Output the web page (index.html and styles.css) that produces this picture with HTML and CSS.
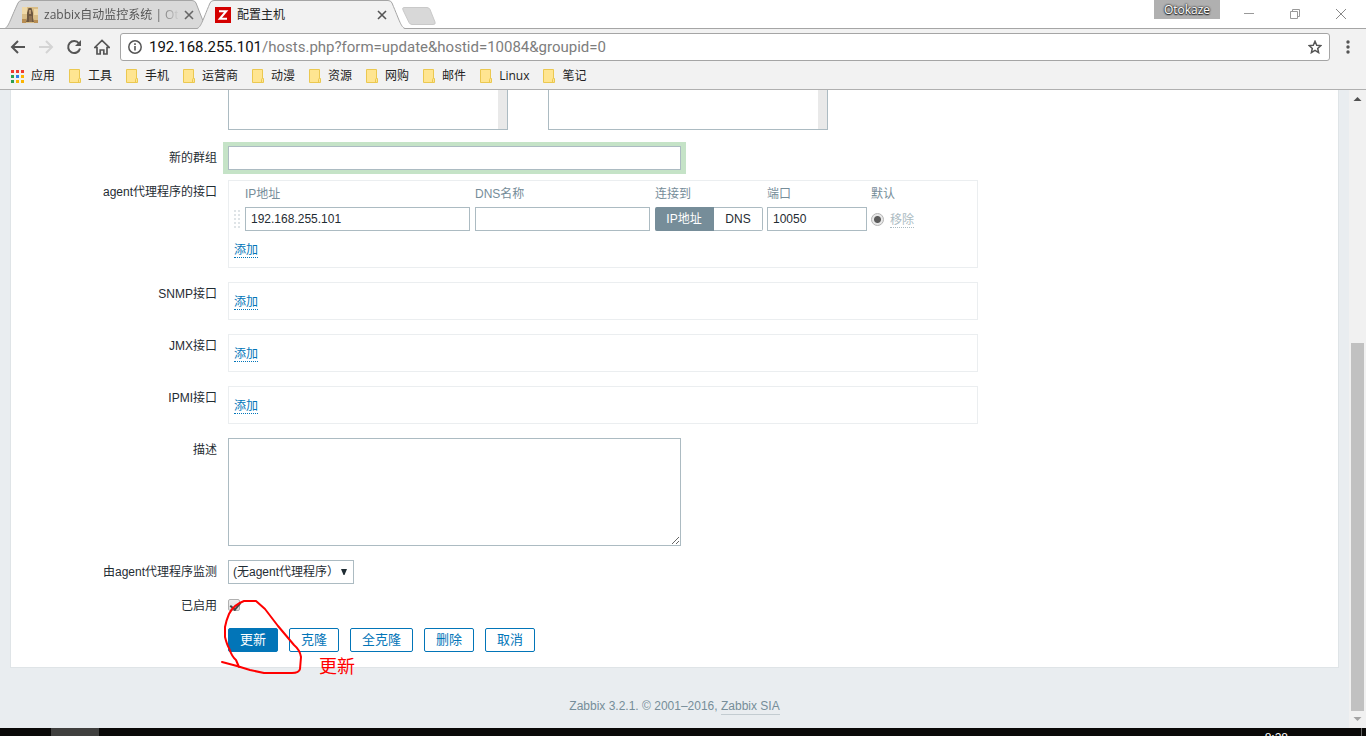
FILE: index.html
```html
<!DOCTYPE html>
<html lang="zh-CN">
<head>
<meta charset="utf-8">
<title>配置主机</title>
<link rel="stylesheet" href="styles.css">
</head>
<body>
<header class="browser">
  <div class="tabstrip">
    <svg class="tab-shapes" width="440" height="29" viewBox="0 0 440 29" aria-hidden="true">
      <path d="M5 28.5C9 26 10 20 18 3Q19 .5 22 .5H192Q195 .5 196 3L206 28.5Z" fill="#d9d9d9" stroke="#a5a5a5"/>
      <path d="M197 29C201 27 202 22 210 3Q211 .5 214 .5H388Q391 .5 392 3C400 22 401 27 405 29Z" fill="#f2f2f2"/>
      <path d="M197 28.500C201 27 202 22 210 3Q211 .5 214 .5H388Q391 .5 392 3C400 22 401 27 405 28.500" fill="none" stroke="#a5a5a5"/>
      <path d="M404 7.500H427Q429 7.500 430 9.500L435 22Q436 24.500 433 24.500H412Q410 24.500 409 22.500L403 10Q402 7.500 404 7.500Z" fill="#d8d8d8" stroke="#c9c9c9"/>
    </svg>
    <div class="tab tab-back">
      <svg width="16" height="16" viewBox="0 0 16 16" aria-hidden="true"><path fill="#d9bd86" d="M0 0h16v16H0z"/><path fill="#efd9a8" d="M0 0h5v7H0zM12 2h4v6h-4z"/><path fill="#b88d52" d="M0 12h4v4H0zM12 13h4v3h-4z"/><path fill="#6e5840" d="M6.500 1h3L11 6v5l1 4h-2V9H7v6H4l1-4V6z"/><path fill="#b99a73" d="M7 3h2v4H7z"/><path fill="#8d7050" d="M7 9h3v6H7z"/></svg>
      <span class="tab-title fade">zabbix自动监控系统 | Ot</span>
      <button class="tab-close" aria-label="关闭标签页"><svg width="10" height="10" viewBox="0 0 10 10"><path d="M1 1l8 8M9 1L1 9" stroke="#666" stroke-width="1.600"/></svg></button>
    </div>
    <div class="tab tab-front">
      <svg width="16" height="16" viewBox="0 0 16 16" aria-hidden="true"><path fill="#d40000" d="M0 0h16v16H0z"/><path d="M4 4.200h7.200L4.800 11.800H12" fill="none" stroke="#fff" stroke-width="2"/></svg>
      <span class="tab-title">配置主机</span>
      <button class="tab-close" aria-label="关闭标签页"><svg width="10" height="10" viewBox="0 0 10 10"><path d="M1 1l8 8M9 1L1 9" stroke="#555" stroke-width="1.600"/></svg></button>
    </div>
    <div class="window-controls">
      <span class="profile">Otokaze</span>
      <button aria-label="最小化"><svg width="12" height="12" viewBox="0 0 12 12"><path d="M1 5.500h10" stroke="#999"/></svg></button>
      <button aria-label="还原"><svg width="12" height="12" viewBox="0 0 12 12" fill="none" stroke="#999"><path d="M1.500 3.500h7v7h-7zM3.500 3V1.500h7v7H9"/></svg></button>
      <button aria-label="关闭"><svg width="12" height="12" viewBox="0 0 12 12"><path d="M1 1l10 10M11 1L1 11" stroke="#888"/></svg></button>
    </div>
  </div>
  <div class="toolbar">
    <div class="nav-buttons">
      <button aria-label="后退"><svg width="16" height="16" viewBox="0 0 16 16" fill="none" stroke="#555" stroke-width="2"><path d="M15 8H2M8 2L2 8l6 6"/></svg></button>
      <button aria-label="前进"><svg width="16" height="16" viewBox="0 0 16 16" fill="none" stroke="#d4d4d4" stroke-width="2"><path d="M1 8h13M8 2l6 6-6 6"/></svg></button>
      <button aria-label="刷新"><svg width="16" height="16" viewBox="0 0 16 16"><path d="M13 4.500A6 6 0 1 0 14 9.500" fill="none" stroke="#555" stroke-width="2"/><path d="M15 1v6H9z" fill="#555"/></svg></button>
      <button aria-label="主页"><svg width="16" height="16" viewBox="0 0 16 16"><path d="M.7 8.500L8 1.500l7.300 7H13V15H9.800v-4H6.200v4H3V8.500z" fill="none" stroke="#555" stroke-width="1.700"/></svg></button>
    </div>
    <div class="address">
      <svg width="14" height="14" viewBox="0 0 14 14" aria-hidden="true"><circle cx="7" cy="7" r="6.200" fill="none" stroke="#555" stroke-width="1.500"/><path d="M7 6v4.500M7 3.300v1.600" stroke="#555" stroke-width="1.600"/></svg>
      <a class="url" href="#"><b>192.168.255.101</b>/hosts.php?form=update&amp;hostid=10084&amp;groupid=0</a>
      <button aria-label="收藏"><svg width="14" height="14" viewBox="0 0 14 14"><path d="M7 1.300l1.700 3.900 4.100.4-3.100 2.800.9 4.200L7 10.400l-3.600 2.200.9-4.200L1.200 5.600l4.100-.4z" fill="none" stroke="#555" stroke-width="1.500"/></svg></button>
    </div>
    <button class="menu" aria-label="菜单"><svg width="4" height="14" viewBox="0 0 4 14" fill="#555"><circle cx="2" cy="2" r="1.700"/><circle cx="2" cy="7" r="1.700"/><circle cx="2" cy="12" r="1.700"/></svg></button>
  </div>
  <svg class="defs" aria-hidden="true"><symbol id="folder" viewBox="0 0 12 14"><path d="M.5.500h10v9h1v4H.5z" fill="#ffe591" stroke="#ebc850"/><path d="M9.500 13V10.500Q9.500 9.500 10.500 9.500" fill="none" stroke="#ebc850"/></symbol></svg>
  <nav class="bookmarks">
    <a href="#"><svg width="13" height="13" viewBox="0 0 13 13"><path fill="#f03a30" d="M0 0h3v3H0zM5 0h3v3H5zM10 0h3v3h-3z"/><path fill="#2c9f50" d="M0 5h3v3H0zM0 10h3v3H0z"/><path fill="#2a7fe8" d="M5 5h3v3H5z"/><path fill="#fbb400" d="M10 5h3v3h-3zM5 10h3v3H5zM10 10h3v3h-3z"/></svg>应用</a>
    <a href="#"><svg width="12" height="14"><use href="#folder"/></svg>工具</a>
    <a href="#"><svg width="12" height="14"><use href="#folder"/></svg>手机</a>
    <a href="#"><svg width="12" height="14"><use href="#folder"/></svg>运营商</a>
    <a href="#"><svg width="12" height="14"><use href="#folder"/></svg>动漫</a>
    <a href="#"><svg width="12" height="14"><use href="#folder"/></svg>资源</a>
    <a href="#"><svg width="12" height="14"><use href="#folder"/></svg>网购</a>
    <a href="#"><svg width="12" height="14"><use href="#folder"/></svg>邮件</a>
    <a href="#"><svg width="12" height="14"><use href="#folder"/></svg>Linux</a>
    <a href="#"><svg width="12" height="14"><use href="#folder"/></svg>笔记</a>
  </nav>
</header>

<div class="viewport">
  <main class="page">
    <form class="card">
      <div class="row row-lists">
        <span class="label"></span>
        <div class="lists">
          <select multiple class="list" aria-label="所在群组"></select>
          <select multiple class="list" aria-label="其它群组"></select>
        </div>
      </div>
      <div class="row row-tight">
        <label class="label" for="newgroup">新的群组</label>
        <input class="input wide focused" id="newgroup" type="text">
      </div>
      <div class="row">
        <span class="label">agent代理程序的接口</span>
        <div class="box">
          <table class="interfaces">
            <thead><tr><th class="c-drag"></th><th class="c-ip">IP地址</th><th class="c-dns">DNS名称</th><th class="c-via">连接到</th><th class="c-port">端口</th><th>默认</th></tr></thead>
            <tbody><tr>
              <td><svg class="drag" width="6" height="18" viewBox="0 0 6 18" fill="#dfe4e7" aria-hidden="true"><path d="M0 0h2v2H0zM4 0h2v2H4zM0 4h2v2H0zM4 4h2v2H4zM0 8h2v2H0zM4 8h2v2H4zM0 12h2v2H0zM4 12h2v2H4zM0 16h2v2H0zM4 16h2v2H4z"/></svg></td>
              <td><input class="input ip" type="text" value="192.168.255.101" aria-label="IP地址"></td>
              <td><input class="input dns" type="text" aria-label="DNS名称"></td>
              <td><div class="segmented"><button type="button" class="on">IP地址</button><button type="button">DNS</button></div></td>
              <td><input class="input port" type="text" value="10050" aria-label="端口"></td>
              <td><div class="default"><input class="radio" type="radio" checked aria-label="默认"><button type="button" class="remove" disabled>移除</button></div></td>
            </tr></tbody>
          </table>
          <div class="add"><a href="#">添加</a></div>
        </div>
      </div>
      <div class="row"><span class="label">SNMP接口</span><div class="box"><div class="add"><a href="#">添加</a></div></div></div>
      <div class="row"><span class="label">JMX接口</span><div class="box"><div class="add"><a href="#">添加</a></div></div></div>
      <div class="row"><span class="label">IPMI接口</span><div class="box"><div class="add"><a href="#">添加</a></div></div></div>
      <div class="row">
        <label class="label" for="description">描述</label>
        <textarea class="input wide area" id="description"></textarea>
      </div>
      <div class="row row-tight">
        <label class="label" for="proxy">由agent代理程序监测</label>
        <div class="select">
          <select id="proxy"><option>(无agent代理程序）</option></select>
          <svg width="8" height="6" viewBox="0 0 8 6" aria-hidden="true"><path d="M1 0h6L4.500 6h-1z" fill="#1f2c33"/></svg>
        </div>
      </div>
      <div class="row row-tight">
        <label class="label" for="enabled">已启用</label>
        <input class="check" id="enabled" type="checkbox" checked>
      </div>
      <div class="row row-actions">
        <span class="label"></span>
        <div class="actions">
          <button type="button" class="btn primary">更新</button>
          <button type="button" class="btn">克隆</button>
          <button type="button" class="btn">全克隆</button>
          <button type="button" class="btn">删除</button>
          <button type="button" class="btn">取消</button>
          <svg class="scribble" width="84" height="80" viewBox="0 0 84 80" aria-hidden="true"><path d="M2 64L17 68L30 72L44 75H72Q79 75 80 71L81 59Q80 52 74 47L58 28L45 11L36 3H24Q13 7 9 16Q6 23 5 29V39Q7 47 9 50Q12 59 16 62L19 69" fill="none" stroke="#f00" stroke-width="2" stroke-linejoin="round" stroke-linecap="round"/></svg>
          <span class="note">更新</span>
        </div>
      </div>
    </form>
    <footer class="footer">Zabbix 3.2.1. © 2001–2016, <a href="#">Zabbix SIA</a></footer>
  </main>
  <div class="scrollbar" aria-hidden="true">
    <svg width="17" height="17" viewBox="0 0 17 17"><path d="M4.500 11h8L8.500 7z" fill="#505050"/></svg>
    <div class="track"><div class="thumb"></div></div>
    <svg width="17" height="17" viewBox="0 0 17 17"><path d="M4.500 6h8L8.500 10z" fill="#a3a3a3"/></svg>
  </div>
</div>
<div class="taskbar"><span class="task"></span><span class="clock">8:28</span><span class="edge"></span></div>
</body>
</html>
```
FILE: styles.css
```css
* { box-sizing: border-box; }
body {
  margin: 0;
  min-height: 100vh;
  display: flex;
  flex-direction: column;
  overflow: hidden;
  background: #000;
  color: #1f2c33;
  font: 12px/24px "Liberation Sans", "Noto Sans CJK SC", sans-serif;
}
button, input, select, textarea { font: inherit; color: inherit; margin: 0; }
button { padding: 0; border: 0; background: none; }
a { color: inherit; text-decoration: none; }
svg { display: block; flex: none; }

.browser {
  background: #f2f2f2;
  border-bottom: 1px solid #b0b0b0;
  font-family: "Open Sans", "Noto Sans CJK SC", sans-serif;
  color: #222;
}
.defs { position: absolute; width: 0; height: 0; }
.tabstrip {
  position: relative;
  display: flex;
  height: 29px;
  background: #fff;
  border-bottom: 1px solid #a5a5a5;
}
.tab-shapes { position: absolute; top: 0; left: 0; }
.tab { position: relative; display: flex; align-items: center; gap: 6px; height: 29px; }
.tab-back { width: 194px; padding-left: 22px; color: #555; }
.tab-front { width: 193px; padding-left: 21px; }
.tab-title { flex: 1; min-width: 0; white-space: nowrap; }
.fade { mask-image: linear-gradient(to right, #000 112px, transparent 136px); }
.window-controls { display: flex; align-items: flex-start; margin-left: auto; padding-right: 2px; }
.window-controls button { display: flex; justify-content: center; align-items: center; width: 46px; height: 27px; }
.profile {
  width: 66px;
  height: 19px;
  margin-right: 6px;
  background: #b0b0b0;
  color: #fff;
  line-height: 19px;
  text-align: center;
  text-shadow: 0 0 2px #222, 0 0 2px #222, 0 1px 1px #333;
}
.toolbar { display: flex; align-items: center; height: 36px; padding: 0 16px 0 10px; }
.nav-buttons { display: flex; gap: 12px; width: 110px; }
.address {
  flex: 1;
  display: flex;
  align-items: center;
  height: 28px;
  padding: 0 7px;
  border: 1px solid #a5a5a5;
  border-radius: 3px;
  background: #fff;
}
.url { flex: 1; margin-left: 7px; font-family: Roboto, sans-serif; font-size: 15px; color: #7d7d7d; white-space: nowrap; }
.url b { font-weight: 400; color: #111; }
.menu { margin-left: 16px; }
.bookmarks { display: flex; gap: 14px; height: 24px; padding: 1px 0 0 11px; }
.bookmarks a { display: flex; align-items: center; gap: 7px; line-height: 20px; height: 20px; }

.viewport { flex: 1; display: flex; }
.page { flex: 1; background: #e9edf0; }
.card {
  margin: 0 10px;
  padding-bottom: 15px;
  background: #fff;
  border: 1px solid #dfe4e7;
  border-top: 0;
}
.row { display: grid; grid-template-columns: 206px 1fr; column-gap: 11px; margin-bottom: 14px; justify-items: start; }
.row-lists { margin-bottom: 16px; }
.row-tight { margin-bottom: 10px; }
.row-actions { margin-bottom: 0; }
.label { justify-self: end; }
.lists { display: flex; gap: 40px; }
.list {
  width: 280px;
  height: 40px;
  padding: 0;
  border: 1px solid #acbbc2;
  border-top: 0;
  border-radius: 0;
  outline: 0;
  background: linear-gradient(#e9e9e9, #e9e9e9) right / 9px 100% no-repeat #fff;
}
.input {
  display: block;
  height: 24px;
  padding: 0 5px;
  border: 1px solid #acbbc2;
  border-radius: 0;
  outline: 0;
  background: #fff;
}
.wide { width: 453px; }
.focused { box-shadow: -1px 0 0 4px #c5e3c7, 1px 0 0 4px #c5e3c7; }
.area { height: 108px; resize: both; }
.box { width: 100%; max-width: 750px; border: 1px solid #ebeef0; }
.interfaces { width: 100%; table-layout: fixed; border-collapse: collapse; }
.interfaces th { height: 26px; padding: 0; text-align: left; font-weight: 400; color: #768d99; }
.interfaces td { height: 24px; padding: 0; }
.c-drag { width: 16px; }
.c-ip { width: 230px; }
.c-dns { width: 180px; }
.c-via { width: 112px; }
.c-port { width: 104px; }
.drag { margin-left: 5px; }
.ip { width: 225px; }
.dns { width: 175px; }
.port { width: 100px; }
.segmented { display: flex; width: 108px; height: 24px; line-height: 22px; }
.segmented button { flex: 1; border: 1px solid #acbbc2; border-left: 0; border-radius: 0 2px 2px 0; }
.segmented .on { flex: none; width: 59px; background: #768d99; border-color: #768d99; border-radius: 2px 0 0 2px; color: #fff; }
.default { display: flex; align-items: center; gap: 6px; }
.radio {
  appearance: none;
  width: 13px;
  height: 13px;
  border: 1px solid #b5b5b5;
  border-radius: 50%;
  background: radial-gradient(circle, #5c5c5c 3px, #e8e8e8 4px);
}
.remove { padding-top: 2px; color: #acbbc2; line-height: 14px; border-bottom: 1px dotted #acbbc2; }
.add { height: 36px; padding: 12px 0 0 5px; line-height: 14px; }
.add a { display: inline-block; color: #0275b8; border-bottom: 1px dotted #0275b8; }
.select { display: grid; align-items: center; width: 126px; }
.select select {
  grid-area: 1 / 1;
  appearance: none;
  width: 100%;
  height: 24px;
  padding: 0 4px;
  border: 1px solid #acbbc2;
  border-radius: 0;
  background: #fff;
  line-height: 22px;
}
.select svg { grid-area: 1 / 1; justify-self: end; margin-right: 6px; pointer-events: none; }
.check {
  appearance: none;
  width: 12px;
  height: 12px;
  margin-top: 5px;
  border: 1px solid #b0b0b0;
  border-radius: 2px;
  background: linear-gradient(#eee, #ddd);
}
.check::before {
  content: "";
  display: block;
  width: 5px;
  height: 8px;
  margin-left: 3px;
  border: solid #444;
  border-width: 0 2px 2px 0;
  transform: rotate(40deg);
}
.actions { position: relative; display: flex; gap: 11px; }
.btn {
  height: 24px;
  padding: 0 11px;
  border: 1px solid #0275b8;
  border-radius: 2px;
  background: #fff;
  color: #0275b8;
  font-size: 13px;
  line-height: 22px;
}
.primary { background: #0275b8; color: #fff; }
.scribble { position: absolute; left: -8px; top: -30px; }
.note { position: absolute; left: 91px; top: 27px; color: #f00; font-size: 18px; white-space: nowrap; }
.footer { padding: 26px 0 10px; text-align: center; line-height: 24px; color: #768d99; }
.footer a { display: inline-block; line-height: 15px; border-bottom: 1px solid #c3ccd1; }
.scrollbar { display: flex; flex-direction: column; width: 17px; background: #f1f1f1; }
.track { flex: 1; display: flex; flex-direction: column; padding: 0 2px; }
.track::before { content: ""; flex: 236; }
.thumb { flex: 368; background: #c1c1c1; }
.taskbar { display: flex; flex: none; height: 8px; padding: 0 4px 0 51px; overflow: hidden; background: #0a0908; color: #fff; }
.task { width: 48px; background: #403f3e; }
.clock { margin-left: auto; margin-right: 73px; padding-top: 4px; line-height: 12px; }
.edge { width: 1px; background: #666; }
```
